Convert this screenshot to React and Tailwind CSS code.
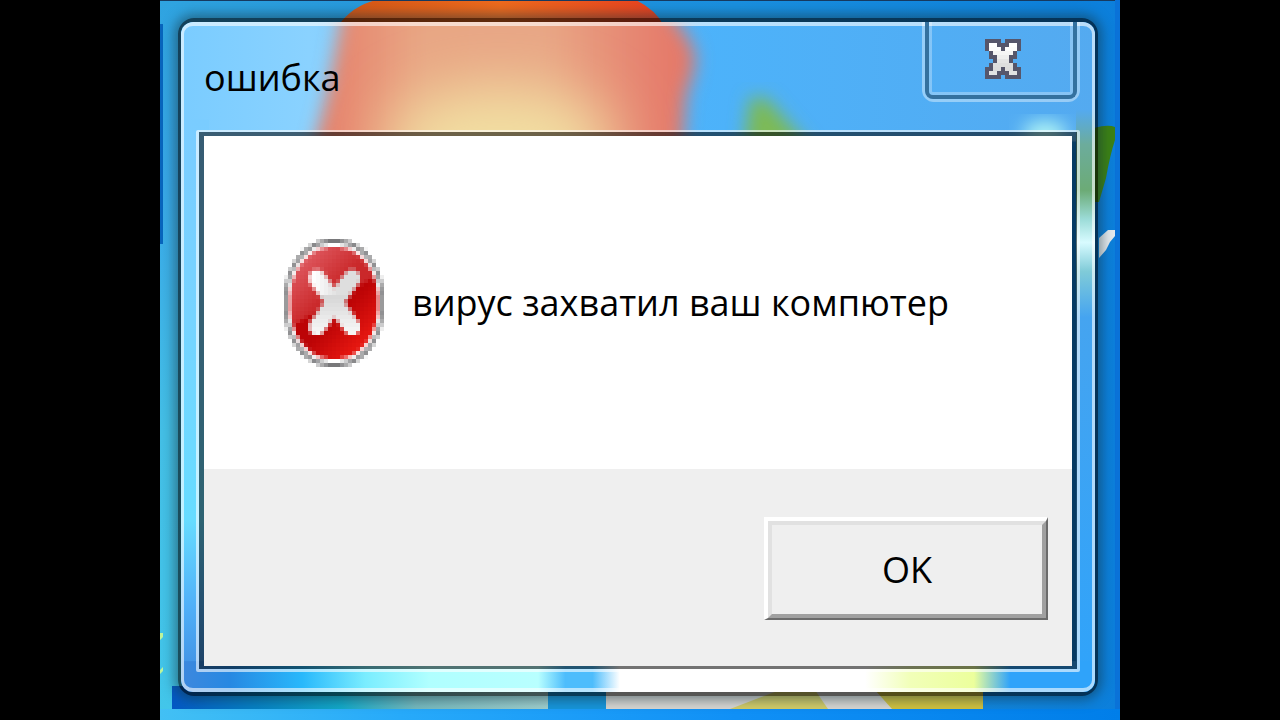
const GLYPH = [
  "####.####",
  "#oo###oo#",
  "#ooo#ooo#",
  ".#ooooo#.",
  ".##ooo##.",
  "..#ooo#..",
  ".#ooooo#.",
  "##oo#oo##",
  "#oo###oo#",
  "####.####",
];
const SHADES = ["", "#ffffff", "#fcfcfc", "#f5f5f5", "#eeeeee", "#e4e4e4", "#dedede", "#dcdcdc", "#e2e2e2", ""];

function CloseGlyph() {
  return (
    <svg viewBox="0 0 36 40" className="h-10 w-9" shapeRendering="crispEdges" aria-hidden="true">
      {GLYPH.map((row, y) =>
        row.split("").map((c, x) =>
          c === "." ? null : (
            <rect key={x + "-" + y} x={x * 4} y={y * 4} width="4" height="4" fill={c === "#" ? "#56566b" : SHADES[y]} />
          )
        )
      )}
    </svg>
  );
}

function Wallpaper() {
  return (
    <svg viewBox="160 0 960 720" preserveAspectRatio="none" className="absolute inset-0 h-full w-full" aria-hidden="true">
      <defs>
        <linearGradient id="sky" x1="0" x2="1" y1="0" y2="0">
          <stop offset="0" stopColor="#2fa3e0" />
          <stop offset="0.3" stopColor="#2496dc" />
          <stop offset="0.6" stopColor="#1a90e0" />
          <stop offset="1" stopColor="#0c7fdb" />
        </linearGradient>
        <linearGradient id="leftSky" x1="0" x2="0" y1="0" y2="1">
          <stop offset="0" stopColor="#2fa3e0" />
          <stop offset="0.25" stopColor="#38a8e8" />
          <stop offset="0.6" stopColor="#44bfe6" />
          <stop offset="1" stopColor="#42c6ea" />
        </linearGradient>
        <linearGradient id="floor" x1="0" x2="1" y1="0" y2="0">
          <stop offset="0" stopColor="#42c0f4" />
          <stop offset="0.25" stopColor="#27aafa" />
          <stop offset="0.6" stopColor="#1090f6" />
          <stop offset="1" stopColor="#007ee9" />
        </linearGradient>
        <linearGradient id="strip" gradientUnits="userSpaceOnUse" x1="172" x2="548" y1="0" y2="0">
          <stop offset="0" stopColor="#0458c4" />
          <stop offset="0.22" stopColor="#0680c4" />
          <stop offset="0.45" stopColor="#13a9c8" />
          <stop offset="0.65" stopColor="#76b9be" />
          <stop offset="1" stopColor="#a0cfce" />
        </linearGradient>
        <linearGradient id="flag" x1="0" x2="1" y1="0" y2="0">
          <stop offset="0" stopColor="#d45616" />
          <stop offset="0.5" stopColor="#ee6a1d" />
          <stop offset="1" stopColor="#e84020" />
        </linearGradient>
      </defs>
      <rect x="160" y="0" width="960" height="720" fill="url(#sky)" />
      <rect x="160" y="0" width="40" height="720" fill="url(#leftSky)" />
      <rect x="160" y="24" width="3" height="220" fill="#0865bd" />
      <path d="M338 26Q352 6 376 0H636Q656 10 664 26Z" fill="url(#flag)" />
      <rect x="160" y="0" width="960" height="1" fill="#173a60" />
      <path d="M1094 128Q1108 124 1115 127V140Q1110 155 1106 178L1099 202H1094Z" fill="#3c8215" />
      <path d="M1099 238L1108 230H1115V236L1110 242L1106 250L1099 258Z" fill="#e5eaee" />
      <rect x="1115" y="0" width="5" height="720" fill="#0a72d8" />
      <path d="M160 633h3v4l-3 3zM160 670l3-3v4l-3 3z" fill="#bdf59b" />
      <rect x="172" y="686" width="376" height="23" fill="url(#strip)" />
      <rect x="548" y="690" width="58" height="19" fill="#1795da" />
      <rect x="606" y="690" width="377" height="19" fill="#d8d6d2" />
      <path d="M730 709L780 690H815L828 709Z" fill="#d2cb68" />
      <path d="M875 690H983V709H892Z" fill="#d0c13f" />
      <rect x="160" y="709" width="960" height="11" fill="url(#floor)" />
    </svg>
  );
}

function Glass() {
  return (
    <svg viewBox="181 22 914 673" preserveAspectRatio="none" className="absolute inset-0 h-full w-full" aria-hidden="true">
      <defs>
        <filter id="soft" x="-30%" y="-30%" width="160%" height="160%">
          <feGaussianBlur stdDeviation="9" />
        </filter>
        <filter id="softer" x="-80%" y="-120%" width="260%" height="340%">
          <feGaussianBlur stdDeviation="30" />
        </filter>
        <linearGradient id="pane" x1="0" x2="1" y1="0" y2="0">
          <stop offset="0" stopColor="#7accff" />
          <stop offset="0.14" stopColor="#8ad2ff" />
          <stop offset="0.55" stopColor="#4cb3fb" />
          <stop offset="1" stopColor="#54aaf0" />
        </linearGradient>
        <linearGradient id="leftPane" x1="0" x2="0" y1="0" y2="1">
          <stop offset="0" stopColor="#7accff" />
          <stop offset="0.35" stopColor="#76d4ff" />
          <stop offset="0.7" stopColor="#66dcff" />
          <stop offset="0.85" stopColor="#50b0f8" />
          <stop offset="1" stopColor="#3c88de" />
        </linearGradient>
        <linearGradient id="rightPane" gradientUnits="userSpaceOnUse" x1="0" x2="0" y1="110" y2="690">
          <stop offset="0" stopColor="#54aaf0" />
          <stop offset="0.06" stopColor="#6cac9c" />
          <stop offset="0.14" stopColor="#6cab76" />
          <stop offset="0.19" stopColor="#9cdcd8" />
          <stop offset="0.23" stopColor="#d8fbff" />
          <stop offset="0.28" stopColor="#80cbd8" />
          <stop offset="0.36" stopColor="#45a4f0" />
          <stop offset="1" stopColor="#2fa3fa" />
        </linearGradient>
        <linearGradient id="bottomPane" gradientUnits="userSpaceOnUse" x1="184" x2="1092" y1="0" y2="0">
          <stop offset="0" stopColor="#3c88de" />
          <stop offset="0.05" stopColor="#2788e2" />
          <stop offset="0.13" stopColor="#28b8fb" />
          <stop offset="0.2" stopColor="#7aedff" />
          <stop offset="0.27" stopColor="#b0ffff" />
          <stop offset="0.39" stopColor="#b8ffff" />
          <stop offset="0.42" stopColor="#4dbdfc" />
          <stop offset="0.45" stopColor="#4dbdfc" />
          <stop offset="0.48" stopColor="#ffffff" />
          <stop offset="0.75" stopColor="#ffffff" />
          <stop offset="0.8" stopColor="#f1ffb8" />
          <stop offset="0.87" stopColor="#ecff9c" />
          <stop offset="0.91" stopColor="#2fa3fa" />
          <stop offset="1" stopColor="#2fa3fa" />
        </linearGradient>
        <linearGradient id="blob" gradientUnits="userSpaceOnUse" x1="330" x2="690" y1="0" y2="0">
          <stop offset="0" stopColor="#e6826c" />
          <stop offset="0.25" stopColor="#e8a684" />
          <stop offset="0.6" stopColor="#e8a685" />
          <stop offset="0.95" stopColor="#e57a6a" />
          <stop offset="1" stopColor="#e67868" />
        </linearGradient>
      </defs>
      <rect x="181" y="22" width="914" height="120" fill="url(#pane)" />
      <g filter="url(#soft)">
        <path d="M348 -20H640Q685 25 694 52Q698 64 686 95L680 180H304Q326 110 334 60Z" fill="url(#blob)" />
      </g>
      <ellipse cx="500" cy="146" rx="115" ry="60" fill="#f2dfa2" filter="url(#softer)" />
      <path d="M750 98L766 98L812 150H744Z" fill="#7dba55" filter="url(#soft)" />
      <ellipse cx="1045" cy="134" rx="22" ry="12" fill="#b4f8f4" filter="url(#soft)" />
      <rect x="181" y="120" width="28" height="575" fill="url(#leftPane)" />
      <rect x="1076" y="110" width="19" height="585" fill="url(#rightPane)" />
      <rect x="184" y="664" width="911" height="31" fill="url(#bottomPane)" />
    </svg>
  );
}

const CELL = 4;
const COLS = 25;
const ROWS = 32;

const mix = (a, b, t) => a.map((v, i) => v + (b[i] - v) * Math.max(0, Math.min(1, t)));

function distance(px, py, x1, y1, x2, y2) {
  const dx = x2 - x1;
  const dy = y2 - y1;
  const t = Math.max(0, Math.min(1, ((px - x1) * dx + (py - y1) * dy) / (dx * dx + dy * dy)));
  return Math.hypot(px - x1 - t * dx, py - y1 - t * dy);
}

function badgeColor(x, y) {
  const shape = (rx, ry) => Math.abs((x - 50) / rx) ** 2.15 + Math.abs((y - 64) / ry) ** 2.15;
  if (shape(50, 64) > 1) return [255, 255, 255];
  if (shape(47, 60) > 1) return [120, 120, 122];
  if (shape(44, 56) > 1) return [255, 255, 255];
  const arm = Math.min(distance(x, y, 33, 39, 68, 88), distance(x, y, 68, 39, 33, 88));
  if (arm < 8.5) {
    return y < 56 ? mix([255, 255, 255], [222, 222, 222], (x - 30) / 24) : mix([216, 216, 216], [246, 246, 246], (y - 60) / 32);
  }
  if (y < 92 - x * 0.6) return mix([222, 88, 94], [202, 40, 42], (x + y - 40) / 60);
  return mix([188, 4, 6], [228, 22, 16], (x + y - 130) / 50);
}

const BADGE = [];
for (let r = 0; r < ROWS; r++) {
  for (let c = 0; c < COLS; c++) {
    const sum = [0, 0, 0];
    for (let i = 0; i < 16; i++) {
      badgeColor(c * CELL + (i % 4) + 0.5, r * CELL + Math.floor(i / 4) + 0.5).forEach((v, k) => (sum[k] += v / 16));
    }
    BADGE.push({ x: c * CELL, y: r * CELL, fill: "rgb(" + sum.map(Math.round).join(",") + ")" });
  }
}

function ErrorIcon() {
  return (
    <svg viewBox="0 0 100 128" className="h-32 w-[100px] shrink-0" shapeRendering="crispEdges" aria-hidden="true">
      {BADGE.map((p) => (
        <rect key={p.x + "-" + p.y} x={p.x} y={p.y} width={CELL} height={CELL} fill={p.fill} />
      ))}
    </svg>
  );
}

export default function App() {
  return (
    <main className="flex min-h-screen justify-center bg-black font-['Open_Sans','Noto_Sans',sans-serif] text-black">
      <div className="relative flex w-3/4 overflow-hidden pt-[18px] pr-[22px] pb-6 pl-[18px]">
        <Wallpaper />
        <section
          role="dialog"
          aria-labelledby="title"
          className="relative flex flex-1 flex-col rounded-2xl border-x-3 border-y-4 border-black/60 shadow-[0_0_12px_4px_rgba(20,50,60,0.5)]"
        >
          <div className="relative flex flex-1 flex-col overflow-hidden rounded-xl">
            <Glass />
            <div className="relative flex flex-1 flex-col rounded-xl border-x-3 border-y-4 border-white/60">
              <header className="flex h-26 items-start justify-between pr-3 pl-5">
                <h1 id="title" className="pt-6 text-[36px] leading-14">ошибка</h1>
                <button
                  type="button"
                  aria-label="Закрыть"
                  className="-mt-1 flex h-20 w-[158px] rounded-b-xl border-x-3 border-b-3 border-white/40"
                >
                  <span className="flex h-full w-full rounded-b-lg border-x-4 border-b-4 border-[#34719f]">
                    <span className="flex h-full w-full items-center justify-center rounded-b-sm border-x-3 border-b-3 border-white/30 pt-1 pl-1">
                      <CloseGlyph />
                    </span>
                  </span>
                </button>
              </header>
              <div className="mx-3 mb-4 flex flex-1 flex-col rounded-xs border-3 border-t-2 border-white/60">
                <div className="flex flex-1 flex-col border-x-5 border-t-4 border-b-3 border-black/55">
                  <div className="flex flex-1 items-center gap-7 bg-white pl-20">
                    <ErrorIcon />
                    <p className="text-[36px] leading-12 whitespace-nowrap">вирус захватил ваш компютер</p>
                  </div>
                  <footer className="flex justify-end bg-[#efefef] pt-12 pr-6 pb-[46px]">
                    <button
                      type="button"
                      className="h-[103px] w-[284px] border-t-4 border-r-2 border-b-2 border-l-4 border-t-white border-r-[#6b6b6b] border-b-[#6b6b6b] border-l-white"
                    >
                      <span className="flex h-full w-full items-center justify-center border-4 border-t-[#e1e1e1] border-r-[#a0a0a0] border-b-[#a0a0a0] border-l-[#e1e1e1] text-[36px]">
                        OK
                      </span>
                    </button>
                  </footer>
                </div>
              </div>
            </div>
          </div>
        </section>
      </div>
    </main>
  );
}
